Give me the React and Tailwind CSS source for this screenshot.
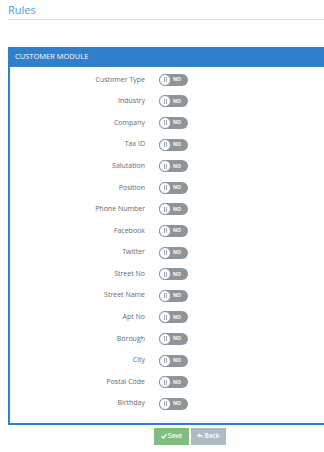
import React from "react";

const fields = [
  "Customer Type",
  "Industry",
  "Company",
  "Tax ID",
  "Salutation",
  "Position",
  "Phone Number",
  "Facebook",
  "Twitter",
  "Street No",
  "Street Name",
  "Apt No",
  "Borough",
  "City",
  "Postal Code",
  "Birthday",
];

function Toggle() {
  return (
    <div className="relative flex h-[12px] w-[29px] items-center rounded-full bg-[#8d959c]">
      <div className="absolute left-0 top-0 flex h-[12px] w-[12px] items-center justify-center gap-[1px] rounded-full border border-[#8d959c] bg-white">
        <span className="block h-[5px] w-[1px] bg-[#a0a8ae]" />
        <span className="block h-[5px] w-[1px] bg-[#a0a8ae]" />
      </div>
      <span className="ml-[14px] text-[5px] font-bold leading-none text-white">NO</span>
    </div>
  );
}

export default function App() {
  return (
    <div className="h-[452px] w-[324px] overflow-hidden bg-white" style={{ fontFamily: '"Open Sans", sans-serif' }}>
      <div className="w-[340px] pl-2">
        <div className="border-b border-[#dfe4e8] pb-[2px] pt-[2px]">
          <div className="text-[11px] leading-[15px] text-[#4a9ad8]">Rules</div>
        </div>
        <div className="mt-[27px] border-2 border-t-0 border-[#317ecb]">
          <div className="flex h-[20px] items-center bg-[#317ecb] pl-[5px] text-[7.5px] font-medium uppercase text-white">
            Customer Module
          </div>
          <div className="pb-[8px] pt-[2px]">
            {fields.map((f) => (
              <div key={f} className="flex h-[21.6px] items-center">
                <div className="w-[135px] text-right text-[7px] text-[#666a70]">{f}</div>
                <div className="ml-[14px]">
                  <Toggle />
                </div>
              </div>
            ))}
          </div>
        </div>
        <div className="mt-[3px] flex gap-[2px] pl-[146px]">
          <div className="flex h-[17px] w-[35px] items-center justify-center gap-[1px] bg-[#80bd80] text-[6.5px] font-semibold text-white">
            <svg width="6" height="6" viewBox="0 0 10 10">
              <path d="M1 5.5 L4 8.5 L9 2" stroke="white" strokeWidth="2.2" fill="none" />
            </svg>
            Save
          </div>
          <div className="flex h-[17px] w-[35px] items-center justify-center gap-[1px] bg-[#adbbc5] text-[6.5px] font-semibold text-white">
            <svg width="6" height="6" viewBox="0 0 10 10">
              <path d="M0 4 L4 0.5 L4 2.5 C8 2.5 10 5 9.5 9.5 C8.5 6.5 7 5.5 4 5.5 L4 7.5 Z" fill="white" />
            </svg>
            Back
          </div>
        </div>
      </div>
    </div>
  );
}
